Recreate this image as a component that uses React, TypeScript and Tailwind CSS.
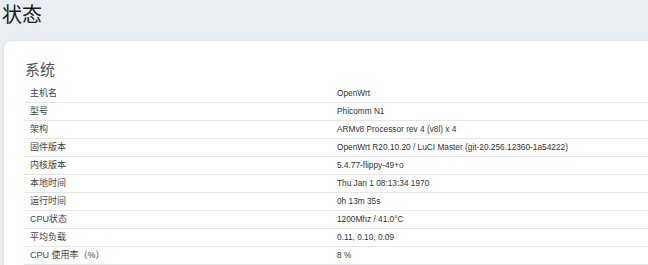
const rows: [string, string][] = [
  ["主机名", "OpenWrt"],
  ["型号", "Phicomm N1"],
  ["架构", "ARMv8 Processor rev 4 (v8l) x 4"],
  ["固件版本", "OpenWrt R20.10.20 / LuCI Master (git-20.256.12360-1a54222)"],
  ["内核版本", "5.4.77-flippy-49+o"],
  ["本地时间", "Thu Jan 1 08:13:34 1970"],
  ["运行时间", "0h 13m 35s"],
  ["CPU状态", "1200Mhz / 41.0°C"],
  ["平均负载", "0.11, 0.10, 0.09"],
  ["CPU 使用率（%）", "8 %"],
];

export default function App() {
  return (
    <div
      className="w-[648px] h-[265px] overflow-hidden bg-[#e9eef3] text-[#333]"
      style={{ fontFamily: '"Liberation Sans", "Noto Sans CJK SC", sans-serif' }}
    >
      <h2 className="h-[41px] pl-[2px] pt-[3px] text-[20px] leading-[24px] text-[#1a1a1a]">状态</h2>
      <div className="ml-[4px] bg-white rounded-tl-[8px] shadow-[0_0_3px_rgba(0,0,0,0.08)] pl-[20px] pt-[18px] pb-4">
        <h3 className="pl-[1px] text-[15px] leading-[22px] text-[#555] mb-[4px]">系统</h3>
        <div className="text-[8.3px]">
          {rows.map(([k, v]) => (
            <div key={k} className="flex h-[18px] items-center border-b border-[#e6e6e6]">
              <div className="w-[306px] pl-[6px] text-[9px] text-[#444]">{k}</div>
              <div className="pl-[7px]">{v}</div>
            </div>
          ))}
        </div>
      </div>
    </div>
  );
}
